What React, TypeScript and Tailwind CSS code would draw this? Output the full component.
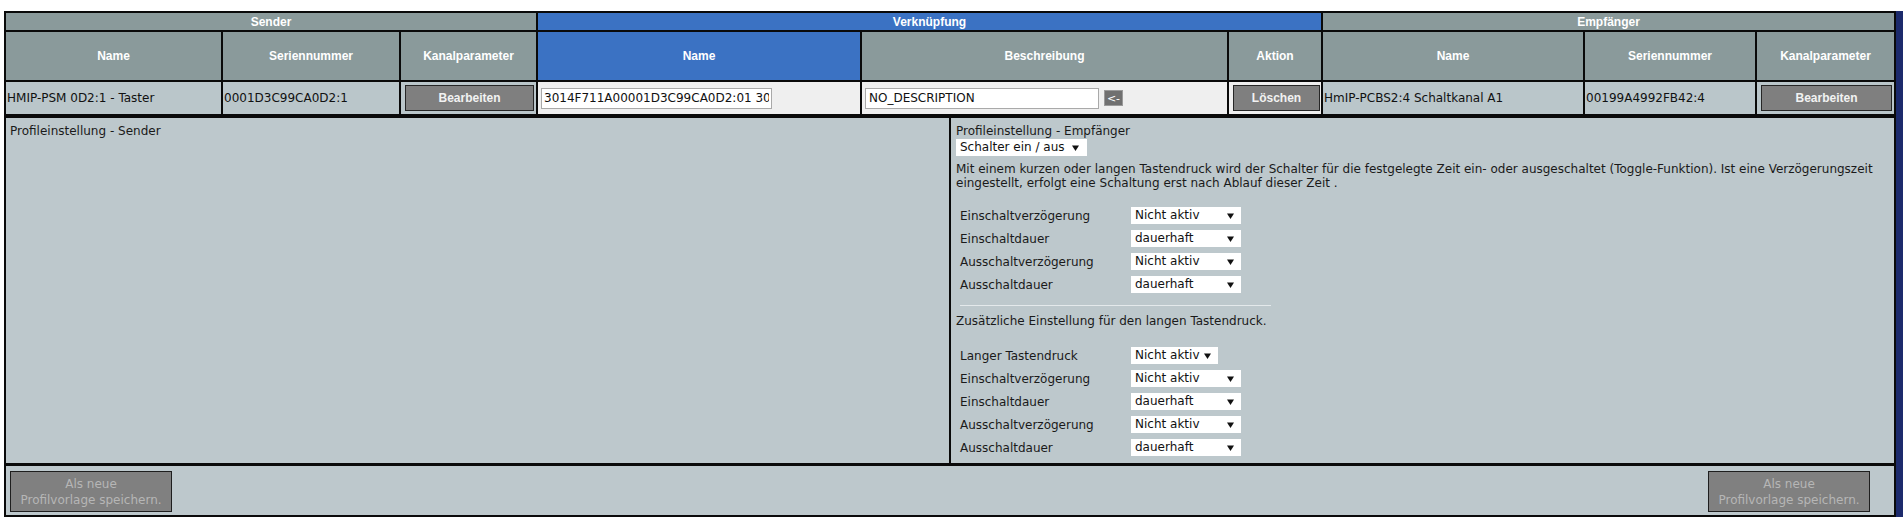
import React from 'react';

/**
 * Direktverknüpfung bearbeiten – Sender / Verknüpfung / Empfänger
 */

const body = "font-['DejaVu_Sans',sans-serif]";
const head = "font-['Liberation_Sans',Arial,sans-serif]";

function Arrow() {
  return (
    <svg width="7" height="6" viewBox="0 0 7 6" className="shrink-0">
      <path d="M0 0.5h7L3.5 6z" fill="#111" />
    </svg>
  );
}

function Th({ children, blue, span }: { children: React.ReactNode; blue?: boolean; span?: boolean }) {
  return (
    <div
      className={`flex items-center justify-center text-[12px] font-bold text-white ${head} ${
        blue ? 'bg-[#3b72c3]' : 'bg-[#8a9a9b]'
      } ${span ? 'col-span-3' : ''}`}
    >
      {children}
    </div>
  );
}

function Btn({ children }: { children: React.ReactNode }) {
  return (
    <button
      className={`flex h-[26px] w-full items-center justify-center border border-[#262626] bg-[#7f7f7f] text-[12px] font-bold text-[#f2f2f2] ${head}`}
    >
      {children}
    </button>
  );
}

function Sel({ value, w }: { value: string; w: string }) {
  return (
    <div className={`flex h-[17px] items-center justify-between bg-white pl-[4px] pr-[7px] text-[12px] leading-[17px] text-[#111] ${w}`}>
      <span>{value}</span>
      <Arrow />
    </div>
  );
}

function Row({ label, value, w = 'w-[110px]' }: { label: string; value: string; w?: string }) {
  return (
    <div className="ml-[4px] flex h-[23px] items-center">
      <span className="w-[171px] text-[12px] text-[#1a1a1a]">{label}</span>
      <Sel value={value} w={w} />
    </div>
  );
}

function SaveBtn() {
  return (
    <button
      className={`flex h-[41px] w-[162px] flex-col items-center justify-center border border-[#1e1e1e] bg-[#808080] text-[12px] leading-[16px] text-[#b6b6b6] ${body}`}
    >
      <span>Als neue</span>
      <span>Profilvorlage speichern.</span>
    </button>
  );
}

export default function App() {
  return (
    <div className={`min-h-screen bg-white pt-[11px] pl-[4px] ${body}`}>
      <div className="flex w-[1899px]">
        <div className="w-[1892px] bg-[#0a0a0a] p-[2px]">
          {/* Kopfzeilen + Daten */}
          <div className="grid grid-cols-[215px_176px_135px_322px_365px_92px_260px_170px_137px] grid-rows-[17px_48px_32px] gap-[2px]">
            <Th span>Sender</Th>
            <Th span blue>Verknüpfung</Th>
            <Th span>Empfänger</Th>

            <Th>Name</Th>
            <Th>Seriennummer</Th>
            <Th>Kanalparameter</Th>
            <Th blue>Name</Th>
            <Th>Beschreibung</Th>
            <Th>Aktion</Th>
            <Th>Name</Th>
            <Th>Seriennummer</Th>
            <Th>Kanalparameter</Th>

            <div className="flex items-center bg-[#bac6ca] pl-[1px] text-[12px] text-[#111]">HMIP-PSM 0D2:1 - Taster</div>
            <div className="flex items-center bg-[#bac6ca] pl-[1px] text-[12px] text-[#111]">0001D3C99CA0D2:1</div>
            <div className="flex items-center bg-[#bac6ca] pl-[4px] pr-[2px]">
              <Btn>Bearbeiten</Btn>
            </div>
            <div className="flex items-center bg-[#efefef] pl-[3px]">
              <input
                readOnly
                value="3014F711A00001D3C99CA0D2:01 3014F711A00001D3C99CA0D2:1"
                className="h-[21px] w-[231px] border border-[#a9a9a9] bg-white px-[2px] text-[12px] text-[#111] outline-none"
              />
            </div>
            <div className="flex items-center gap-[5px] bg-[#efefef] pl-[3px]">
              <input
                readOnly
                value="NO_DESCRIPTION"
                className="h-[21px] w-[234px] border border-[#a9a9a9] bg-white px-[3px] text-[12px] text-[#111] outline-none"
              />
              <button className="flex h-[16px] w-[19px] items-center justify-center border border-[#9a9a9a] bg-[#707070] text-[11px] leading-none text-white">
                &lt;-
              </button>
            </div>
            <div className="flex items-center bg-[#efefef] pl-[4px] pr-[1px]">
              <Btn>Löschen</Btn>
            </div>
            <div className="flex items-center bg-[#bac6ca] pl-[1px] text-[12px] text-[#111]">HmIP-PCBS2:4 Schaltkanal A1</div>
            <div className="flex items-center bg-[#bac6ca] pl-[1px] text-[12px] text-[#111]">00199A4992FB42:4</div>
            <div className="flex items-center bg-[#bac6ca] pl-[4px] pr-[2px]">
              <Btn>Bearbeiten</Btn>
            </div>
          </div>

          {/* Profileinstellungen */}
          <div className="mt-[4px] flex h-[345px] gap-[2px]">
            <div className="w-[943px] bg-[#bdc8cc] pl-[4px] pt-[6px] text-[12px] leading-[14px] text-[#1a1a1a]">
              Profileinstellung - Sender
            </div>
            <div className="flex-1 bg-[#bdc8cc] pl-[5px] pt-[6px] text-[12px] leading-[14px] text-[#1a1a1a]">
              <div>Profileinstellung - Empfänger</div>
              <div className="mt-[1px] inline-flex h-[17px] items-center gap-[7px] bg-white pl-[4px] pr-[8px] leading-[17px] text-[#111]">
                <span>Schalter ein / aus</span>
                <Arrow />
              </div>
              <p className="mt-[6px] pr-[6px]">
                Mit einem kurzen oder langen Tastendruck wird der Schalter für die festgelegte Zeit ein- oder ausgeschaltet
                (Toggle-Funktion). Ist eine Verzögerungszeit eingestellt, erfolgt eine Schaltung erst nach Ablauf dieser Zeit .
              </p>
              <div className="mt-[14px]">
                <Row label="Einschaltverzögerung" value="Nicht aktiv" />
                <Row label="Einschaltdauer" value="dauerhaft" />
                <Row label="Ausschaltverzögerung" value="Nicht aktiv" />
                <Row label="Ausschaltdauer" value="dauerhaft" />
              </div>
              <div className="ml-[4px] mt-[9px] h-px w-[311px] bg-[#e4e9eb]" />
              <p className="mt-[8px]">Zusätzliche Einstellung für den langen Tastendruck.</p>
              <div className="mt-[16px]">
                <Row label="Langer Tastendruck" value="Nicht aktiv" w="w-[87px]" />
                <Row label="Einschaltverzögerung" value="Nicht aktiv" />
                <Row label="Einschaltdauer" value="dauerhaft" />
                <Row label="Ausschaltverzögerung" value="Nicht aktiv" />
                <Row label="Ausschaltdauer" value="dauerhaft" />
              </div>
            </div>
          </div>

          {/* Profilvorlage speichern */}
          <div className="mt-[3px] flex h-[49px] items-start justify-between bg-[#bdc8cc] pl-[4px] pr-[24px] pt-[5px]">
            <SaveBtn />
            <SaveBtn />
          </div>
        </div>
        <div className="w-[7px] bg-[#1c2a6c]" />
      </div>
    </div>
  );
}
